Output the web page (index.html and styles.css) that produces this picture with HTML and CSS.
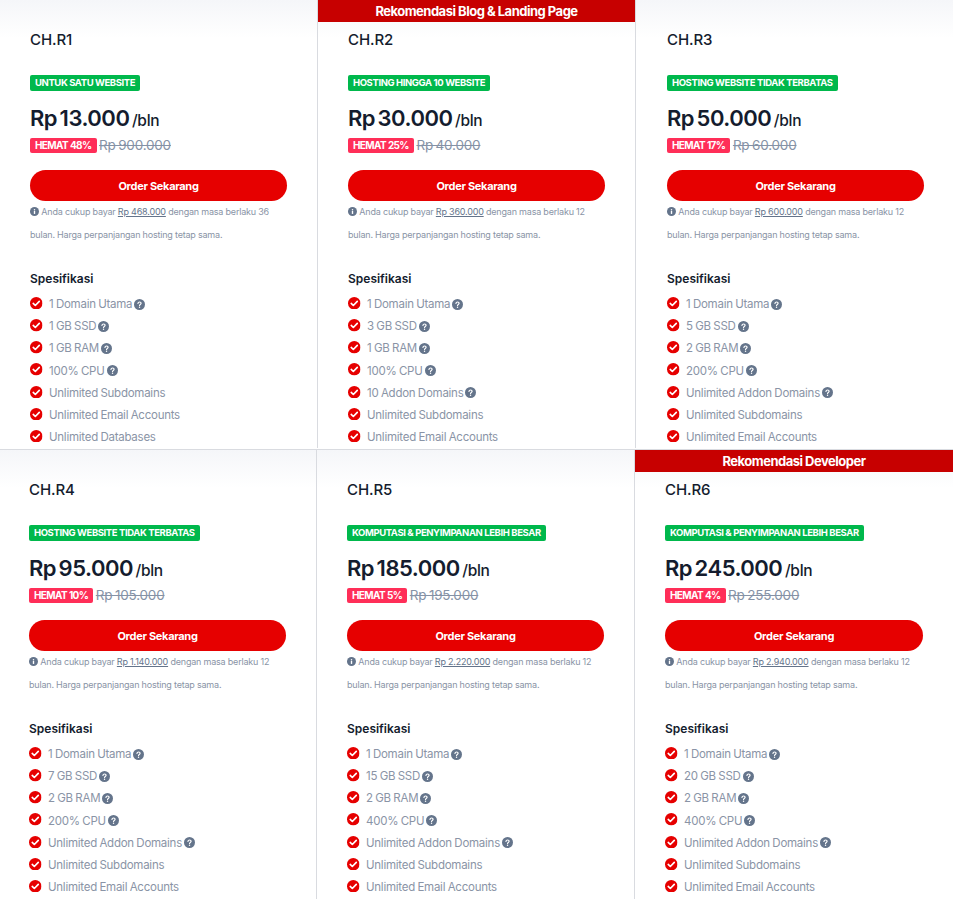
FILE: index.html
```html
<!DOCTYPE html>
<html lang="id">
<head>
<meta charset="utf-8">
<title>Paket Hosting</title>
<link rel="stylesheet" href="styles.css">
</head>
<body>
<svg class="defs" width="0" height="0" aria-hidden="true">
  <symbol id="chk" viewBox="0 0 24 24"><circle cx="12" cy="12" r="12" fill="#e60000"/><path d="M6.2 12.4l4 3.9 7.6-8" fill="none" stroke="#fff" stroke-width="3.2" stroke-linecap="round" stroke-linejoin="round"/></symbol>
  <symbol id="q" viewBox="0 0 24 24"><circle cx="12" cy="12" r="12" fill="#64748b"/><path d="M8.6 9.4c.3-1.8 1.700-2.800 3.500-2.800 2 0 3.400 1.200 3.400 2.900 0 2.400-3.300 2.500-3.400 4.700" fill="none" stroke="#fff" stroke-width="2.600" stroke-linecap="round"/><circle cx="12.100" cy="18" r="1.600" fill="#fff"/></symbol>
  <symbol id="i" viewBox="0 0 24 24"><circle cx="12" cy="12" r="12" fill="#64748b"/><rect x="10.200" y="10.500" width="3.600" height="8" fill="#fff"/><circle cx="12" cy="7" r="2" fill="#fff"/></symbol>
</svg>
<main class="plans">
<section class="row row-a">
  <article class="card">
    <h3 class="name">CH.R1</h3>
    <span class="tag">UNTUK SATU WEBSITE</span>
    <p class="price">Rp 13.000 <small>/bln</small></p>
    <p class="save"><span class="off">HEMAT 48%</span><s>Rp 900.000</s></p>
    <a class="order">Order Sekarang</a>
    <p class="note"><svg class="ni"><use href="#i"/></svg> Anda cukup bayar <u>Rp 468.000</u> dengan masa berlaku 36 bulan. Harga perpanjangan hosting tetap sama.</p>
    <h4 class="spec">Spesifikasi</h4>
    <ul class="feat">
      <li><svg class="ck"><use href="#chk"/></svg>1 Domain Utama<svg class="qm"><use href="#q"/></svg></li>
      <li><svg class="ck"><use href="#chk"/></svg>1 GB SSD<svg class="qm"><use href="#q"/></svg></li>
      <li><svg class="ck"><use href="#chk"/></svg>1 GB RAM<svg class="qm"><use href="#q"/></svg></li>
      <li><svg class="ck"><use href="#chk"/></svg>100% CPU<svg class="qm"><use href="#q"/></svg></li>
      <li><svg class="ck"><use href="#chk"/></svg>Unlimited Subdomains</li>
      <li><svg class="ck"><use href="#chk"/></svg>Unlimited Email Accounts</li>
      <li><svg class="ck"><use href="#chk"/></svg>Unlimited Databases</li>
    </ul>
  </article>
  <article class="card">
    <div class="ribbon">Rekomendasi Blog &amp; Landing Page</div>
    <h3 class="name">CH.R2</h3>
    <span class="tag">HOSTING HINGGA 10 WEBSITE</span>
    <p class="price">Rp 30.000 <small>/bln</small></p>
    <p class="save"><span class="off">HEMAT 25%</span><s>Rp 40.000</s></p>
    <a class="order">Order Sekarang</a>
    <p class="note"><svg class="ni"><use href="#i"/></svg> Anda cukup bayar <u>Rp 360.000</u> dengan masa berlaku 12 bulan. Harga perpanjangan hosting tetap sama.</p>
    <h4 class="spec">Spesifikasi</h4>
    <ul class="feat">
      <li><svg class="ck"><use href="#chk"/></svg>1 Domain Utama<svg class="qm"><use href="#q"/></svg></li>
      <li><svg class="ck"><use href="#chk"/></svg>3 GB SSD<svg class="qm"><use href="#q"/></svg></li>
      <li><svg class="ck"><use href="#chk"/></svg>1 GB RAM<svg class="qm"><use href="#q"/></svg></li>
      <li><svg class="ck"><use href="#chk"/></svg>100% CPU<svg class="qm"><use href="#q"/></svg></li>
      <li><svg class="ck"><use href="#chk"/></svg>10 Addon Domains<svg class="qm"><use href="#q"/></svg></li>
      <li><svg class="ck"><use href="#chk"/></svg>Unlimited Subdomains</li>
      <li><svg class="ck"><use href="#chk"/></svg>Unlimited Email Accounts</li>
    </ul>
  </article>
  <article class="card card-end">
    <h3 class="name">CH.R3</h3>
    <span class="tag">HOSTING WEBSITE TIDAK TERBATAS</span>
    <p class="price">Rp 50.000 <small>/bln</small></p>
    <p class="save"><span class="off">HEMAT 17%</span><s>Rp 60.000</s></p>
    <a class="order">Order Sekarang</a>
    <p class="note"><svg class="ni"><use href="#i"/></svg> Anda cukup bayar <u>Rp 600.000</u> dengan masa berlaku 12 bulan. Harga perpanjangan hosting tetap sama.</p>
    <h4 class="spec">Spesifikasi</h4>
    <ul class="feat">
      <li><svg class="ck"><use href="#chk"/></svg>1 Domain Utama<svg class="qm"><use href="#q"/></svg></li>
      <li><svg class="ck"><use href="#chk"/></svg>5 GB SSD<svg class="qm"><use href="#q"/></svg></li>
      <li><svg class="ck"><use href="#chk"/></svg>2 GB RAM<svg class="qm"><use href="#q"/></svg></li>
      <li><svg class="ck"><use href="#chk"/></svg>200% CPU<svg class="qm"><use href="#q"/></svg></li>
      <li><svg class="ck"><use href="#chk"/></svg>Unlimited Addon Domains<svg class="qm"><use href="#q"/></svg></li>
      <li><svg class="ck"><use href="#chk"/></svg>Unlimited Subdomains</li>
      <li><svg class="ck"><use href="#chk"/></svg>Unlimited Email Accounts</li>
    </ul>
  </article>
</section>
<section class="row row-b">
  <article class="card">
    <h3 class="name">CH.R4</h3>
    <span class="tag">HOSTING WEBSITE TIDAK TERBATAS</span>
    <p class="price">Rp 95.000 <small>/bln</small></p>
    <p class="save"><span class="off">HEMAT 10%</span><s>Rp 105.000</s></p>
    <a class="order">Order Sekarang</a>
    <p class="note"><svg class="ni"><use href="#i"/></svg> Anda cukup bayar <u>Rp 1.140.000</u> dengan masa berlaku 12 bulan. Harga perpanjangan hosting tetap sama.</p>
    <h4 class="spec">Spesifikasi</h4>
    <ul class="feat">
      <li><svg class="ck"><use href="#chk"/></svg>1 Domain Utama<svg class="qm"><use href="#q"/></svg></li>
      <li><svg class="ck"><use href="#chk"/></svg>7 GB SSD<svg class="qm"><use href="#q"/></svg></li>
      <li><svg class="ck"><use href="#chk"/></svg>2 GB RAM<svg class="qm"><use href="#q"/></svg></li>
      <li><svg class="ck"><use href="#chk"/></svg>200% CPU<svg class="qm"><use href="#q"/></svg></li>
      <li><svg class="ck"><use href="#chk"/></svg>Unlimited Addon Domains<svg class="qm"><use href="#q"/></svg></li>
      <li><svg class="ck"><use href="#chk"/></svg>Unlimited Subdomains</li>
      <li><svg class="ck"><use href="#chk"/></svg>Unlimited Email Accounts</li>
    </ul>
  </article>
  <article class="card">
    <h3 class="name">CH.R5</h3>
    <span class="tag">KOMPUTASI &amp; PENYIMPANAN LEBIH BESAR</span>
    <p class="price">Rp 185.000 <small>/bln</small></p>
    <p class="save"><span class="off">HEMAT 5%</span><s>Rp 195.000</s></p>
    <a class="order">Order Sekarang</a>
    <p class="note"><svg class="ni"><use href="#i"/></svg> Anda cukup bayar <u>Rp 2.220.000</u> dengan masa berlaku 12 bulan. Harga perpanjangan hosting tetap sama.</p>
    <h4 class="spec">Spesifikasi</h4>
    <ul class="feat">
      <li><svg class="ck"><use href="#chk"/></svg>1 Domain Utama<svg class="qm"><use href="#q"/></svg></li>
      <li><svg class="ck"><use href="#chk"/></svg>15 GB SSD<svg class="qm"><use href="#q"/></svg></li>
      <li><svg class="ck"><use href="#chk"/></svg>2 GB RAM<svg class="qm"><use href="#q"/></svg></li>
      <li><svg class="ck"><use href="#chk"/></svg>400% CPU<svg class="qm"><use href="#q"/></svg></li>
      <li><svg class="ck"><use href="#chk"/></svg>Unlimited Addon Domains<svg class="qm"><use href="#q"/></svg></li>
      <li><svg class="ck"><use href="#chk"/></svg>Unlimited Subdomains</li>
      <li><svg class="ck"><use href="#chk"/></svg>Unlimited Email Accounts</li>
    </ul>
  </article>
  <article class="card card-end">
    <div class="ribbon">Rekomendasi Developer</div>
    <h3 class="name">CH.R6</h3>
    <span class="tag">KOMPUTASI &amp; PENYIMPANAN LEBIH BESAR</span>
    <p class="price">Rp 245.000 <small>/bln</small></p>
    <p class="save"><span class="off">HEMAT 4%</span><s>Rp 255.000</s></p>
    <a class="order">Order Sekarang</a>
    <p class="note"><svg class="ni"><use href="#i"/></svg> Anda cukup bayar <u>Rp 2.940.000</u> dengan masa berlaku 12 bulan. Harga perpanjangan hosting tetap sama.</p>
    <h4 class="spec">Spesifikasi</h4>
    <ul class="feat">
      <li><svg class="ck"><use href="#chk"/></svg>1 Domain Utama<svg class="qm"><use href="#q"/></svg></li>
      <li><svg class="ck"><use href="#chk"/></svg>20 GB SSD<svg class="qm"><use href="#q"/></svg></li>
      <li><svg class="ck"><use href="#chk"/></svg>2 GB RAM<svg class="qm"><use href="#q"/></svg></li>
      <li><svg class="ck"><use href="#chk"/></svg>400% CPU<svg class="qm"><use href="#q"/></svg></li>
      <li><svg class="ck"><use href="#chk"/></svg>Unlimited Addon Domains<svg class="qm"><use href="#q"/></svg></li>
      <li><svg class="ck"><use href="#chk"/></svg>Unlimited Subdomains</li>
      <li><svg class="ck"><use href="#chk"/></svg>Unlimited Email Accounts</li>
    </ul>
  </article>
</section>
</main>
</body>
</html>
```
FILE: styles.css
```css
* { box-sizing: border-box; }
html, body { margin: 0; padding: 0; background: #fff; }
body { font-family: Inter, "Liberation Sans", sans-serif; color: #141c2e; height: 899px; overflow: hidden; }
.defs { position: absolute; }
.row { display: grid; overflow: hidden; }
.row-a { grid-template-columns: 318px 318px 317px; height: 448px; margin-bottom: 1px; }
.row-b { grid-template-columns: 317px 318px 318px; height: 450px; border-top: 1px solid #d9dbe0; }
.card { position: relative; padding: 0 30px; border-right: 1px solid #d9dbe0; background: linear-gradient(#f5f6f9 0, #fff 38px); }
.row-a .card-end { padding: 0 29px 0 31px; }
.row-b .card:first-child { padding-left: 29px; }
.card-end { border-right: 0; }
.ribbon { position: absolute; top: 0; left: 0; right: 0; height: 22px; background: #c70000; color: #fff; font-size: 13px; font-weight: 700; line-height: 23px; text-align: center; letter-spacing: -0.5px; }
.row-b .ribbon { top: -1px; height: 23px; line-height: 24px; }
.name { margin: 30px 0 0; font-size: 15px; font-weight: 500; line-height: 19px; letter-spacing: -0.1px; }
.tag { display: table; margin-top: 26px; padding: 0 5px; height: 16px; line-height: 16px; background: #00b84c; color: #fff; border-radius: 2px; font-size: 9.5px; font-weight: 700; letter-spacing: -0.4px; white-space: nowrap; }
.price { margin: 13px 0 0; font-size: 22px; font-weight: 600; line-height: 28px; letter-spacing: -0.5px; word-spacing: -2.5px; }
.price small { font-size: 15.500px; font-weight: 500; letter-spacing: -0.3px; }
.save { display: flex; align-items: center; gap: 2.500px; margin: 2px 0 0; height: 16px; }
.off { padding: 0 5px; height: 15px; line-height: 15px; background: #ff2e58; color: #fff; border-radius: 2px; font-size: 10px; font-weight: 700; letter-spacing: -0.6px; }
.save s { font-size: 13.500px; color: #8592a6; letter-spacing: -0.2px; word-spacing: -1px; }
.order { display: block; margin-top: 17px; height: 31px; line-height: 32px; text-align: center; background: #e60000; color: #fff; border-radius: 16px; font-size: 11px; font-weight: 700; letter-spacing: -0.3px; }
.note { margin: -1px 0 0; font-size: 9px; line-height: 23px; color: #8a94a6; letter-spacing: -0.2px; }
.note u { color: #64748b; }
.ni { width: 9px; height: 9px; vertical-align: -1px; }
.spec { margin: 25px 0 0; font-size: 12px; font-weight: 600; line-height: 16px; }
.feat { margin: 6px 0 0; padding: 0; list-style: none; }
.feat li { display: flex; align-items: center; height: 22.200px; font-size: 11.500px; color: #8a94a6; letter-spacing: -0.25px; word-spacing: -0.5px; white-space: nowrap; }
.ck { width: 12.500px; height: 12.500px; margin-right: 6.500px; flex: none; position: relative; top: -1px; }
.qm { width: 11px; height: 11px; margin-left: 2px; flex: none; }
```
